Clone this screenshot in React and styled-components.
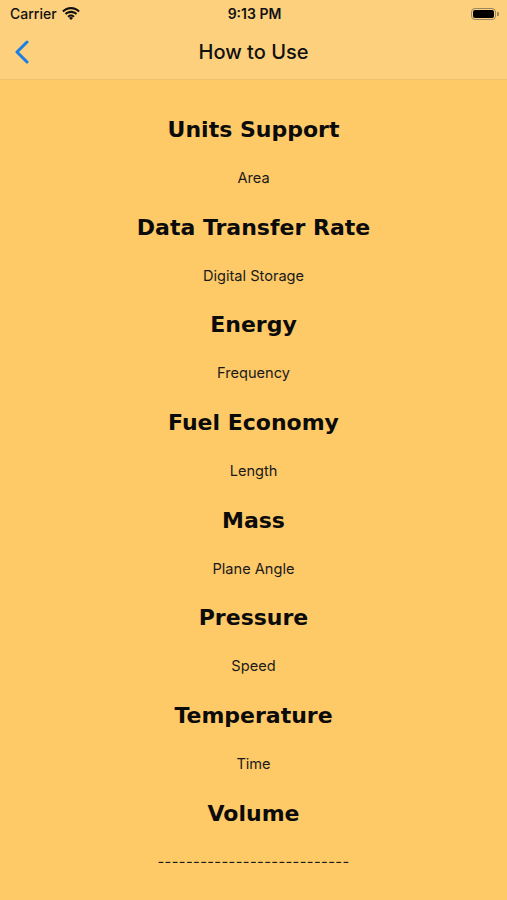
import { Fragment } from 'react';
import styled, { createGlobalStyle } from 'styled-components';

const GlobalStyle = createGlobalStyle`
  html, body {
    margin: 0;
    padding: 0;
    background: #fec967;
  }
  * {
    box-sizing: border-box;
  }
`;

const Screen = styled.div`
  width: 507px;
  min-height: 900px;
  background: #fec967;
  font-family: Inter, "Noto Sans", sans-serif;
  color: #111;
`;

const Header = styled.div`
  background: #fdd07e;
  border-bottom: 1px solid #f0c373;
`;

const StatusBar = styled.div`
  height: 27px;
  display: grid;
  grid-template-columns: 1fr auto 1fr;
  align-items: center;
  padding: 0 8px 0 10px;
  font-size: 14px;
  font-weight: 500;
`;

const Carrier = styled.div`
  display: flex;
  align-items: center;
  gap: 5px;
`;

const Time = styled.div`
  font-weight: 600;
`;

const Battery = styled.div`
  justify-self: end;
  display: flex;
  align-items: center;
`;

const BatteryBody = styled.div`
  width: 25px;
  height: 12px;
  border: 1px solid #9a8660;
  border-radius: 4px;
  padding: 1px;
  display: flex;
`;

const BatteryFill = styled.div`
  flex: 1;
  background: #000;
  border-radius: 2px;
`;

const BatteryCap = styled.div`
  width: 2px;
  height: 4px;
  background: #9a8660;
  border-radius: 0 1px 1px 0;
  margin-left: 1px;
`;

const NavBar = styled.div`
  height: 52px;
  display: grid;
  grid-template-columns: 60px 1fr 60px;
  align-items: center;
  padding-bottom: 2px;
`;

const BackButton = styled.div`
  padding-left: 14px;
  display: flex;
  align-items: center;
`;

const NavTitle = styled.div`
  text-align: center;
  font-size: 20px;
  font-weight: 500;
  color: #111;
`;

const List = styled.div`
  display: flex;
  flex-direction: column;
  align-items: center;
  padding-top: 25px;
`;

const Heading = styled.div`
  font-family: "DejaVu Sans", Verdana, sans-serif;
  font-weight: bold;
  font-size: 22px;
  line-height: 50px;
  height: 50px;
  color: #0b0b0b;
`;

const Sub = styled.div`
  font-size: 14.6px;
  line-height: 47.7px;
  height: 47.7px;
  color: #1a1a1a;
  letter-spacing: ${p => (p.$dashes ? '0.4px' : 'normal')};
`;

const items = [
  ['Units Support', 'Area'],
  ['Data Transfer Rate', 'Digital Storage'],
  ['Energy', 'Frequency'],
  ['Fuel Economy', 'Length'],
  ['Mass', 'Plane Angle'],
  ['Pressure', 'Speed'],
  ['Temperature', 'Time'],
  ['Volume', null],
];

function Wifi() {
  return (
    <svg width="18" height="13" viewBox="0 0 18 13">
      <path d="M9 2.2c2.9 0 5.5 1.1 7.4 3l1.4-1.5C15.5 1.4 12.4 0 9 0S2.5 1.4.2 3.7l1.4 1.5c1.9-1.9 4.5-3 7.4-3z" fill="#111" />
      <path d="M9 5.9c1.9 0 3.6.7 4.8 1.9l1.4-1.5C13.6 4.7 11.4 3.8 9 3.8S4.4 4.7 2.8 6.3l1.4 1.5C5.4 6.6 7.1 5.9 9 5.9z" fill="#111" />
      <path d="M9 9.5c.9 0 1.7.4 2.3 1l1.4-1.5C11.7 8.1 10.4 7.5 9 7.5S6.3 8.1 5.3 9L6.7 10.5c.6-.6 1.4-1 2.3-1z" fill="#111" />
      <path d="M9 13l2-2.1c-.5-.5-1.2-.8-2-.8s-1.5.3-2 .8z" fill="#111" />
    </svg>
  );
}

function Chevron() {
  return (
    <svg width="16" height="24" viewBox="0 0 16 24">
      <path d="M13 2L3 12l10 10" fill="none" stroke="#1a7ee6" strokeWidth="3" strokeLinecap="round" strokeLinejoin="round" />
    </svg>
  );
}

export default function App() {
  return (
    <>
      <GlobalStyle />
      <Screen>
        <Header>
          <StatusBar>
            <Carrier>
              Carrier <Wifi />
            </Carrier>
            <Time>9:13 PM</Time>
            <Battery>
              <BatteryBody>
                <BatteryFill />
              </BatteryBody>
              <BatteryCap />
            </Battery>
          </StatusBar>
          <NavBar>
            <BackButton>
              <Chevron />
            </BackButton>
            <NavTitle>How to Use</NavTitle>
            <div />
          </NavBar>
        </Header>
        <List>
          {items.map(([title, sub]) => (
            <Fragment key={title}>
              <Heading>{title}</Heading>
              {sub ? <Sub>{sub}</Sub> : <Sub $dashes>---------------------------</Sub>}
            </Fragment>
          ))}
        </List>
      </Screen>
    </>
  );
}
